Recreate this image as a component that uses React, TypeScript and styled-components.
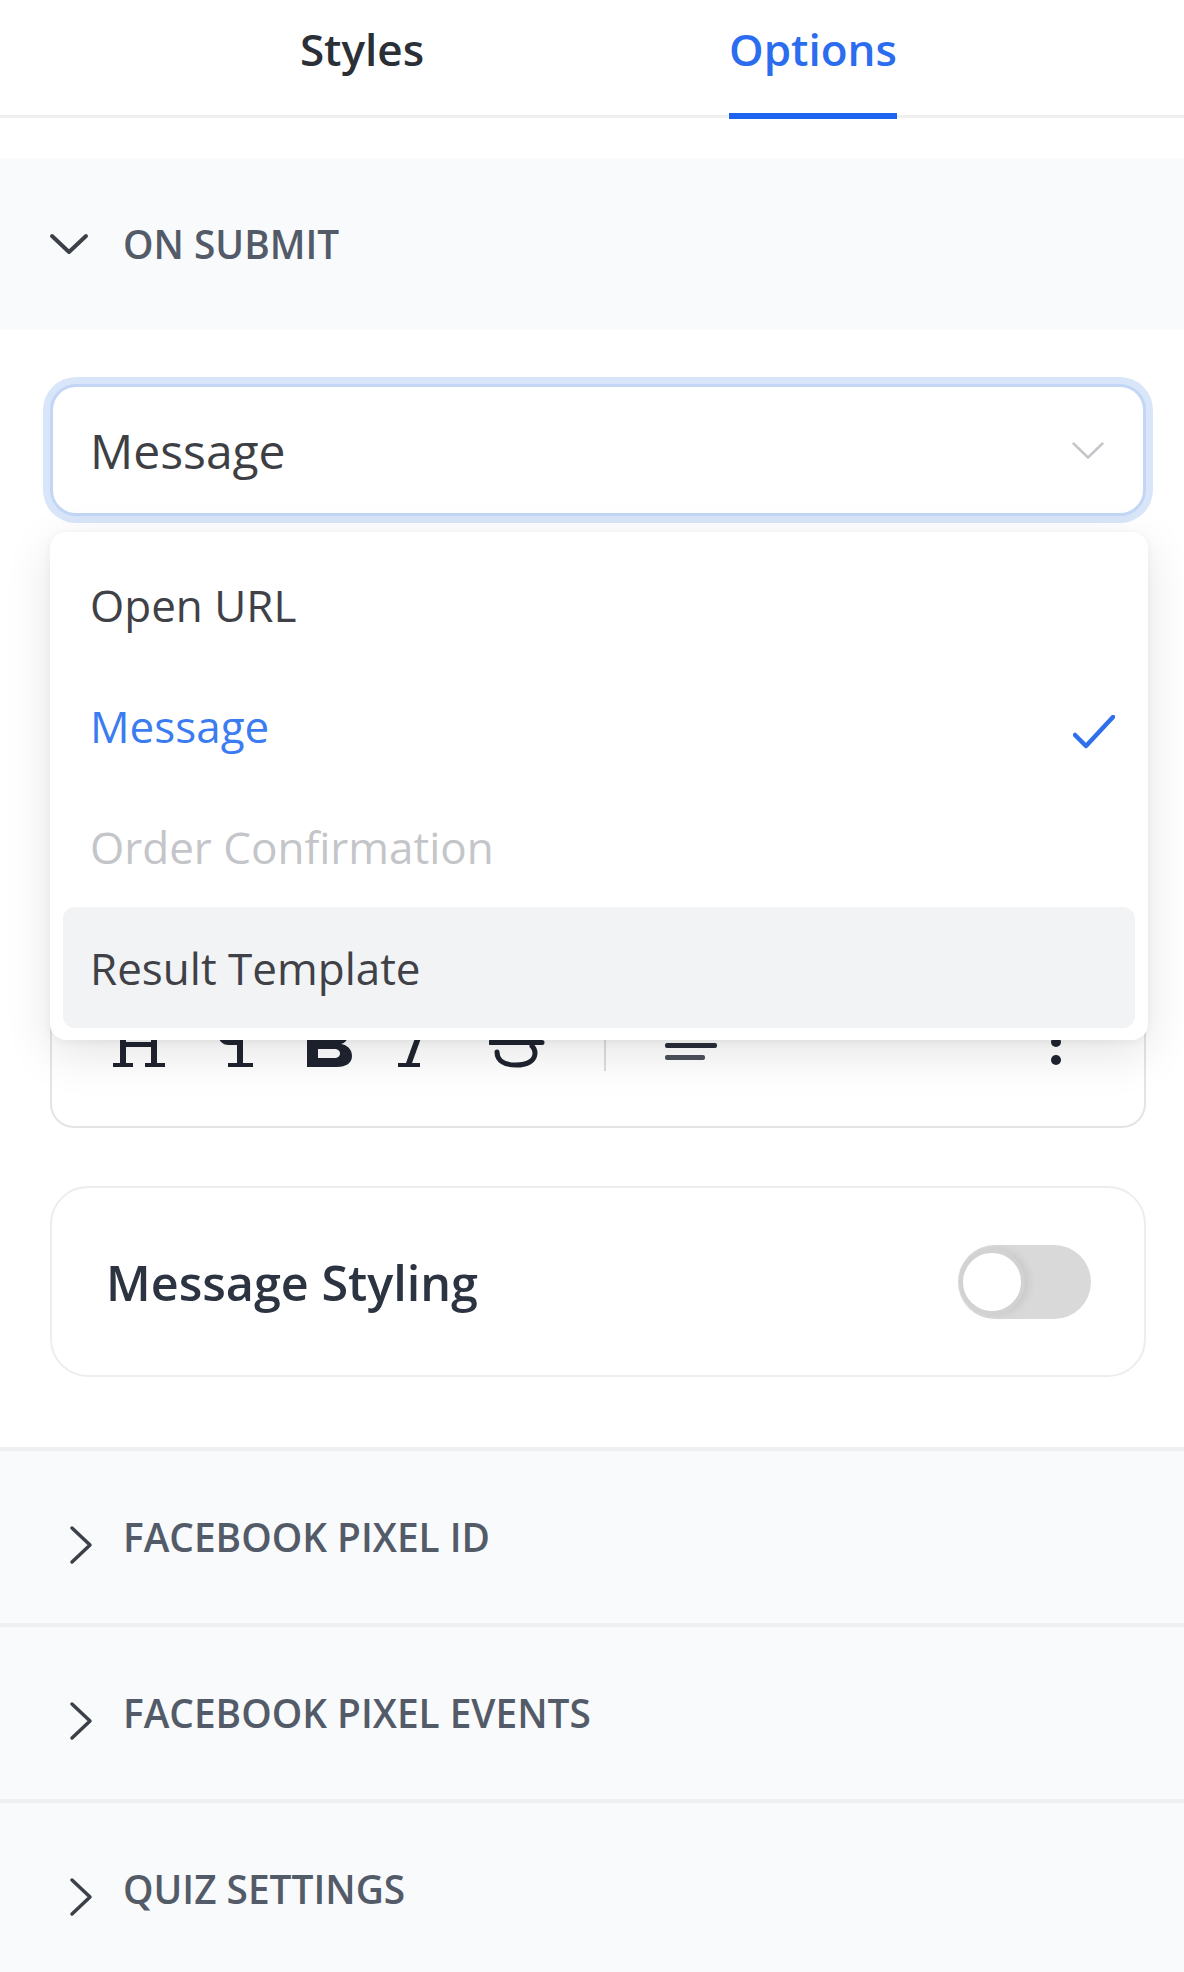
import React from "react";
import styled, { createGlobalStyle } from "styled-components";

const GlobalStyle = createGlobalStyle`
  html, body {
    margin: 0;
    padding: 0;
    background: #fff;
    overflow: hidden;
  }
  * {
    box-sizing: border-box;
  }
  body {
    font-family: "Open Sans", "Noto Sans", Arial, sans-serif;
  }
`;

const Panel = styled.div`
  width: 1184px;
  min-height: 1972px;
  background: #fff;
`;

const TabBar = styled.div`
  display: grid;
  grid-template-columns: 451px 451px;
  justify-content: center;
  padding-right: 9px;
  height: 118px;
  border-bottom: 3px solid #efefef;
`;

const Tab = styled.div<{ $active?: boolean }>`
  justify-self: center;
  height: 119px;
  padding-top: 19px;
  font-size: 44px;
  line-height: 60px;
  font-weight: 600;
  color: ${({ $active }) => ($active ? "#2c6cef" : "#2b2f36")};
  border-bottom: 6px solid ${({ $active }) => ($active ? "#1e64ee" : "transparent")};
`;

const Sections = styled.div`
  padding-top: 40px;
`;

const SectionHeader = styled.div<{ $divided?: boolean }>`
  display: flex;
  align-items: center;
  box-sizing: content-box;
  height: 172px;
  background: #f9fafb;
  border-top: ${({ $divided }) => ($divided ? "4px solid #eef0f3" : "none")};
`;

const ChevronSlot = styled.div<{ $open?: boolean }>`
  width: 123px;
  display: flex;
  align-items: center;
  padding-left: ${({ $open }) => ($open ? "48px" : "68px")};
  padding-top: ${({ $open }) => ($open ? "0" : "16px")};
  color: #3c4048;
`;

const SectionTitle = styled.span`
  font-size: 38.8px;
  font-weight: 600;
  color: #535b69;
  line-height: 52px;
`;

const SectionBody = styled.div`
  background: #fff;
  padding: 54px 38px 70px 50px;
`;

const SelectWrap = styled.div`
  position: relative;
`;

const SelectBox = styled.div`
  display: flex;
  align-items: center;
  justify-content: space-between;
  height: 132px;
  padding: 0 38px 0 37px;
  background: #fff;
  border: 3px solid #c3d6f6;
  border-radius: 26px;
  box-shadow: 0 0 0 7px #d9e6fa;
  font-size: 48px;
  color: #3d3f45;
`;

const Menu = styled.div`
  position: absolute;
  top: 148px;
  left: 0;
  right: -2px;
  z-index: 5;
  padding: 12px 13px;
  background: #fff;
  border-radius: 16px;
  box-shadow: 0 14px 48px rgba(0, 0, 0, 0.11), 0 2px 8px rgba(0, 0, 0, 0.05);
`;

type ItemTone = "normal" | "selected" | "disabled";

const MenuItem = styled.div<{ $tone: ItemTone; $hover?: boolean }>`
  display: flex;
  align-items: center;
  justify-content: space-between;
  height: 121px;
  padding: 0 20px 0 27px;
  border-radius: 12px;
  font-size: 44px;
  background: ${({ $hover }) => ($hover ? "#f2f3f5" : "transparent")};
  color: ${({ $tone }) =>
    $tone === "selected" ? "#3b7cf0" : $tone === "disabled" ? "#c3c5c9" : "#3f4147"};
`;

const CheckMark = styled.span`
  display: flex;
  margin-top: 12px;
`;

const Editor = styled.div`
  margin-top: 40px;
  height: 572px;
  display: flex;
  flex-direction: column;
  justify-content: flex-end;
  border: 2px solid #e4e4e4;
  border-radius: 24px;
  background: #fff;
`;

const Toolbar = styled.div`
  display: flex;
  align-items: flex-end;
  gap: 35px;
  padding: 0 58px 55px 57px;
  color: #1f2430;
`;

const ToolButton = styled.div`
  width: 60px;
  height: 52px;
  display: flex;
`;

const ToolSeparator = styled.div`
  width: 2px;
  height: 52px;
  margin: 0 20px;
  background: #dedede;
`;

const ToolSpacer = styled.div`
  flex: 1;
`;

const StylingCard = styled.div`
  margin-top: 58px;
  height: 191px;
  display: flex;
  align-items: center;
  justify-content: space-between;
  padding: 0 53px 0 54px;
  border: 2px solid #ededed;
  border-radius: 38px;
`;

const CardLabel = styled.span`
  font-size: 48.5px;
  font-weight: 600;
  color: #2c3441;
`;

const Track = styled.div`
  width: 133px;
  height: 74px;
  display: flex;
  align-items: center;
  padding-left: 1px;
  border-radius: 37px;
  background: #d9d9d9;
`;

const Knob = styled.div`
  width: 66px;
  height: 66px;
  border-radius: 50%;
  background: #fff;
  border: 4px solid #d2d2d2;
  box-shadow: 4px 0 8px rgba(0, 0, 0, 0.08);
`;

const ChevronDown = ({ w, h, stroke, color }: { w: number; h: number; stroke: number; color: string }) => (
  <svg width={w} height={h} viewBox={`0 0 ${w} ${h}`} fill="none">
    <polyline
      points={`${stroke},${stroke} ${w / 2},${h - stroke} ${w - stroke},${stroke}`}
      stroke={color}
      strokeWidth={stroke}
      strokeLinecap="round"
      strokeLinejoin="round"
    />
  </svg>
);

const ChevronRight = () => (
  <svg width="26" height="40" viewBox="0 0 26 40" fill="none">
    <polyline points="4,3 22,20 4,37" stroke="#3c4048" strokeWidth="3.5" strokeLinecap="round" strokeLinejoin="round" />
  </svg>
);

const Check = () => (
  <svg width="42" height="34" viewBox="0 0 42 34" fill="none">
    <polyline points="2,20 13,31 40,2" stroke="#2f6fec" strokeWidth="4.5" strokeLinecap="round" strokeLinejoin="round" />
  </svg>
);

const HeadingIcon = () => (
  <svg width="60" height="52" viewBox="0 0 60 52" fill="currentColor">
    <rect x="11" y="4" width="6" height="44" />
    <rect x="42" y="4" width="6" height="44" />
    <rect x="4" y="4" width="20" height="4" />
    <rect x="36" y="4" width="20" height="4" />
    <rect x="4" y="44" width="20" height="4" />
    <rect x="36" y="44" width="20" height="4" />
    <rect x="15" y="23" width="30" height="5" />
  </svg>
);

const PilcrowIcon = () => (
  <svg width="60" height="52" viewBox="0 0 60 52" fill="currentColor">
    <path d="M25 4 H50 V8 H39 V26 H25 C18 26 14 21 14 15 C14 9 18 4 25 4 Z" />
    <rect x="33" y="4" width="6" height="44" />
    <rect x="24" y="44" width="25" height="4" />
  </svg>
);

const BoldIcon = () => (
  <svg width="60" height="52" viewBox="0 0 60 52" fill="currentColor">
    <path d="M8 4 H34 C44 4 49 9 49 16 C49 21 46 24 42 25 C48 26 53 30 53 37 C53 44 47 48 38 48 H8 Z M19 13 V21 H32 C36 21 38 19 38 17 C38 14 36 13 32 13 Z M19 30 V39 H35 C39 39 41 37 41 34.5 C41 32 39 30 35 30 Z" fillRule="evenodd" />
  </svg>
);

const ItalicIcon = () => (
  <svg width="60" height="52" viewBox="0 0 60 52" fill="currentColor">
    <rect x="16" y="4" width="22" height="4" />
    <rect x="4" y="44" width="22" height="4" />
    <polygon points="25,8 31,8 18,44 12,44" />
  </svg>
);

const StrikeIcon = () => (
  <svg width="60" height="52" viewBox="0 0 60 52" fill="none" stroke="currentColor" strokeWidth="5" strokeLinecap="round">
    <path d="M44 11 C40 6 34 4 27 4 C18 4 12 8 12 14 C12 18 15 21 21 22" />
    <path d="M1 23.5 H53" />
    <path d="M8 33 C8 42 16 46 27 46 C38 46 46 42 46 34 C46 31 45 29 43 27" />
  </svg>
);

const AlignIcon = () => (
  <svg width="60" height="52" viewBox="0 0 60 52" fill="currentColor">
    <rect x="4" y="0" width="52" height="5" rx="2" />
    <rect x="4" y="12" width="40" height="5" rx="2" />
    <rect x="4" y="24" width="52" height="5" rx="2" opacity="0.95" />
    <rect x="4" y="36" width="40" height="5" rx="2" opacity="0.8" />
  </svg>
);

const KebabIcon = () => (
  <svg width="60" height="52" viewBox="0 0 60 52" fill="currentColor">
    <circle cx="30" cy="5" r="5" />
    <circle cx="30" cy="23" r="5" />
    <circle cx="30" cy="41" r="5" />
  </svg>
);

const options: { label: string; tone: ItemTone; hover?: boolean }[] = [
  { label: "Open URL", tone: "normal" },
  { label: "Message", tone: "selected" },
  { label: "Order Confirmation", tone: "disabled" },
  { label: "Result Template", tone: "normal", hover: true },
];

const collapsed = ["FACEBOOK PIXEL ID", "FACEBOOK PIXEL EVENTS", "QUIZ SETTINGS"];

function App() {
  return (
    <Panel>
      <GlobalStyle />
      <TabBar>
        <Tab>Styles</Tab>
        <Tab $active>Options</Tab>
      </TabBar>
      <Sections>
        <SectionHeader>
          <ChevronSlot $open>
            <ChevronDown w={42} h={24} stroke={4} color="#3c4048" />
          </ChevronSlot>
          <SectionTitle>ON SUBMIT</SectionTitle>
        </SectionHeader>
        <SectionBody>
          <SelectWrap>
            <SelectBox>
              <span>Message</span>
              <ChevronDown w={34} h={19} stroke={2.5} color="#c4c6ca" />
            </SelectBox>
            <Menu>
              {options.map((o) => (
                <MenuItem key={o.label} $tone={o.tone} $hover={o.hover}>
                  <span>{o.label}</span>
                  {o.tone === "selected" && (
                    <CheckMark>
                      <Check />
                    </CheckMark>
                  )}
                </MenuItem>
              ))}
            </Menu>
          </SelectWrap>
          <Editor>
            <Toolbar>
              <ToolButton><HeadingIcon /></ToolButton>
              <ToolButton><PilcrowIcon /></ToolButton>
              <ToolButton><BoldIcon /></ToolButton>
              <ToolButton><ItalicIcon /></ToolButton>
              <ToolButton><StrikeIcon /></ToolButton>
              <ToolSeparator />
              <ToolButton><AlignIcon /></ToolButton>
              <ToolSpacer />
              <ToolButton><KebabIcon /></ToolButton>
            </Toolbar>
          </Editor>
          <StylingCard>
            <CardLabel>Message Styling</CardLabel>
            <Track>
              <Knob />
            </Track>
          </StylingCard>
        </SectionBody>
        {collapsed.map((title) => (
          <SectionHeader key={title} $divided>
            <ChevronSlot>
              <ChevronRight />
            </ChevronSlot>
            <SectionTitle>{title}</SectionTitle>
          </SectionHeader>
        ))}
      </Sections>
    </Panel>
  );
}

export default App;
